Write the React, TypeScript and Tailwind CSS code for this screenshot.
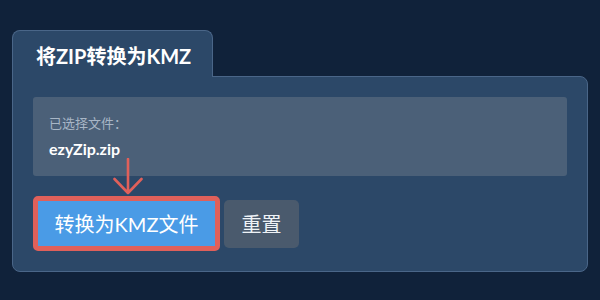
export default function App() {
  return (
    <div
      className="w-[600px] h-[300px] bg-[#10223a] pt-[30px] px-3 overflow-hidden"
      style={{ fontFamily: "Lato, 'Noto Sans CJK SC', sans-serif" }}
    >
      <div className="flex flex-col">
        <div className="relative z-10 -mb-px w-[201px] h-[47px] bg-[#2c4868] border border-b-0 border-[#4a6688] rounded-t-lg pl-[23px] pt-[12px]">
          <h1 className="text-[20px] leading-[26px] font-bold text-white">将ZIP转换为KMZ</h1>
        </div>
        <div className="relative h-[196px] bg-[#2c4868] border border-[#4a6688] rounded-lg rounded-tl-none p-5">
          <div className="h-[79px] bg-[#4b6078] rounded-[3px] pl-4 pt-4">
            <p className="text-[13px] leading-5 text-[#a8b6c6]">已选择文件：</p>
            <p className="mt-[6px] text-[16px] leading-5 font-bold text-white">ezyZip.zip</p>
          </div>
          <div className="mt-5 flex items-center gap-1">
            <div className="border-[5px] border-[#e0605a] rounded-[5px]">
              <button className="w-[177px] h-[45px] bg-[#4a9be6] text-white text-[20px] leading-none">
                转换为KMZ文件
              </button>
            </div>
            <button className="w-[75px] h-[48px] bg-[#4a5a6d] text-[#eef2f6] text-[20px] leading-none rounded-[5px]">
              重置
            </button>
          </div>
          <svg
            className="absolute left-[100px] top-[81px]"
            width="30"
            height="38"
            viewBox="0 0 30 38"
            fill="none"
          >
            <path
              d="M15 1 V35 M1.5 21 L15 35 L28.5 21"
              stroke="#e0605a"
              strokeWidth="2.6"
              strokeLinecap="round"
              strokeLinejoin="round"
            />
          </svg>
        </div>
      </div>
    </div>
  );
}
